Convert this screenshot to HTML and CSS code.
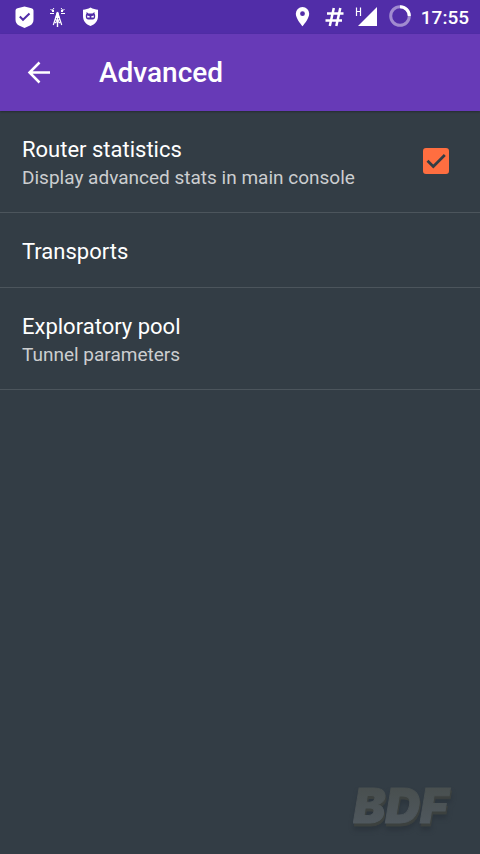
FILE: index.html
```html
<!DOCTYPE html>
<html lang="en">
<head>
<meta charset="utf-8">
<meta name="viewport" content="width=device-width, initial-scale=1">
<title>Advanced</title>
<link rel="stylesheet" href="styles.css">
</head>
<body>
<div class="status-bar">
  <div class="status-group">
    <svg class="status-icon" viewBox="0 0 33 34" aria-hidden="true">
      <path fill="#fff" d="M16.500 6.500L23.500 8.200Q25.500 8.500 25.500 10.500V19.500Q25.500 23.500 22 25.500L16.500 28L11 25.500Q7.500 23.500 7.500 19.500V10.500Q7.500 8.500 9.500 8.200Z"/>
      <path fill="none" stroke="#512da8" stroke-width="2" d="M11.800 16.500L15 19.800L21.500 13.500"/>
    </svg>
    <svg class="status-icon" viewBox="0 0 33 34" aria-hidden="true">
      <g fill="none" stroke="#fff">
        <path stroke-width="1.200" d="M16.500 12L12.300 25M16.500 12L20.700 25M14 19L19 23M19 19L14 23"/>
        <path stroke-width="1.400" d="M16.500 12V27"/>
        <path stroke-width="1" d="M9 13.500H13M20 13.500H24M13 8L11 10.500M20 8L22 10.500M9.500 9L11 10.500M23.500 9L22 10.500"/>
      </g>
      <path fill="#fff" d="M11 10H13V12H11ZM20 10H22V12H20ZM15.500 13H17.500L18.700 18H14.300Z"/>
    </svg>
    <svg class="status-icon" viewBox="0 0 33 34" aria-hidden="true">
      <path fill="#fff" d="M16.500 7.500C19 9 21.500 9.500 24 9.800V16C24 21 21 24.500 16.500 26C12 24.500 9 21 9 16V9.800C11.500 9.500 14 9 16.500 7.500Z"/>
      <path fill="#512da8" d="M12.500 12L14.500 13.500H18.500L20.500 12V13.800Q21.200 14.200 21.200 16Q21.200 19.500 18.500 19.500H14.500Q11.800 19.500 11.800 16Q11.800 14.200 12.500 13.800Z"/>
      <path fill="#fff" d="M13.200 15.500L15.700 16.200V17.500H13.200ZM19.800 15.500L17.300 16.200V17.500H19.800Z"/>
    </svg>
  </div>
  <div class="status-group">
    <svg class="status-icon" viewBox="0 0 33 34" aria-hidden="true">
      <path fill="#fff" fill-rule="evenodd" d="M16.500 7A6.700 6.700 0 0 0 9.800 13.700C9.800 18.700 16.500 26.200 16.500 26.200S23.200 18.700 23.200 13.700A6.700 6.700 0 0 0 16.500 7ZM16.500 11.300A2.400 2.400 0 1 1 16.500 16.100A2.400 2.400 0 1 1 16.500 11.300Z"/>
    </svg>
    <svg class="status-icon" viewBox="0 0 33 34" aria-hidden="true">
      <path fill="none" stroke="#fff" stroke-width="2.500" d="M14.800 8L10.800 26M21.300 8L17.300 26M8 13.500H24.500M6.500 20.500H23"/>
    </svg>
    <svg class="status-icon" viewBox="0 0 33 34" aria-hidden="true">
      <path fill="#fff" d="M25 7V26H6Z"/>
      <path fill="none" stroke="#fff" stroke-width="1.200" d="M4.500 7.500V16M8.500 7.500V16M4.500 11.500H8.500"/>
    </svg>
    <svg class="status-icon" viewBox="0 0 33 34" aria-hidden="true">
      <circle cx="15" cy="16" r="9.300" fill="none" stroke="#a18bd0" stroke-width="3"/>
      <path fill="none" stroke="#fff" stroke-width="3" d="M15 6.700A9.300 9.300 0 0 1 24.300 16"/>
    </svg>
    <time class="clock">17:55</time>
  </div>
</div>
<header class="app-bar">
  <button class="back" type="button" aria-label="Back">
    <svg class="back-icon" viewBox="0 0 24 24" aria-hidden="true">
      <path fill="none" stroke="#fff" stroke-width="2.500" d="M24 11.500H4M13.500 1.500L3.500 11.500L13.500 21.500"/>
    </svg>
  </button>
  <h1 class="title">Advanced</h1>
</header>
<main class="settings">
  <label class="row" for="stats">
    <span class="text">
      <span class="name">Router statistics</span>
      <span class="summary">Display advanced stats in main console</span>
    </span>
    <span class="check">
      <input class="box" type="checkbox" id="stats" checked>
      <svg class="tick" viewBox="0 0 26 26" aria-hidden="true">
        <path fill="none" stroke="#333d45" stroke-width="2.700" d="M4.500 12.700L10.300 18.500L21.800 7"/>
      </svg>
    </span>
  </label>
  <a class="row" href="#transports">
    <span class="text"><span class="name">Transports</span></span>
  </a>
  <a class="row" href="#exploratory">
    <span class="text">
      <span class="name">Exploratory pool</span>
      <span class="summary">Tunnel parameters</span>
    </span>
  </a>
</main>
<div class="watermark">BDF</div>
</body>
</html>
```
FILE: styles.css
```css
* {
  box-sizing: border-box;
}

body {
  margin: 0;
  min-height: 100vh;
  display: flex;
  flex-direction: column;
  background: #333d45;
  color: #fff;
  font-family: Roboto, "Liberation Sans", sans-serif;
}

.status-bar {
  display: flex;
  justify-content: space-between;
  height: 34px;
  padding: 0 11px 0 8px;
  background: #512da8;
}

.status-group {
  display: flex;
}

.status-icon {
  width: 33px;
  height: 34px;
}

.clock {
  padding-left: 3px;
  font-size: 19px;
  font-weight: 500;
  line-height: 36px;
}

.app-bar {
  display: flex;
  align-items: center;
  height: 77px;
  padding: 0 22px;
  background: #673ab7;
  box-shadow: 0 1px 2px rgba(0, 0, 0, 0.3);
}

.back {
  display: flex;
  width: 77px;
  padding: 4px;
  border: 0;
  background: none;
}

.back-icon {
  width: 24px;
  height: 24px;
}

.title {
  margin: 0;
  font-size: 28px;
  font-weight: 500;
  line-height: 36px;
}

.settings {
  flex: 1;
}

.row {
  display: flex;
  align-items: center;
  justify-content: space-between;
  padding: 25px 22px 21px;
  border-bottom: 1px solid #4c555c;
  color: inherit;
  text-decoration: none;
}

.text {
  display: flex;
  flex-direction: column;
}

.name {
  font-size: 22px;
  line-height: 28px;
}

.summary {
  color: #ccced0;
  font-size: 19px;
  line-height: 27px;
}

.check {
  display: grid;
  margin: 0 9px 6px 0;
}

.box,
.tick {
  grid-area: 1 / 1;
  width: 26px;
  height: 26px;
  margin: 0;
}

.box {
  appearance: none;
  border: 2px solid #ff6e40;
  border-radius: 3px;
}

.box:checked {
  background: #ff6e40;
}

.tick {
  visibility: hidden;
  pointer-events: none;
}

.box:checked + .tick {
  visibility: visible;
}

.watermark {
  align-self: flex-end;
  padding: 0 32px 20px 0;
  background: linear-gradient(#474d4b, #515a62 56px);
  background-clip: text;
  color: transparent;
  -webkit-text-stroke: 1px transparent;
  filter: drop-shadow(1px 3px 0 #3c413f) drop-shadow(0 4px 2px #2c353d);
  font-family: Inter, Roboto, sans-serif;
  font-size: 48px;
  font-style: italic;
  font-weight: 900;
  line-height: 56px;
}
```
